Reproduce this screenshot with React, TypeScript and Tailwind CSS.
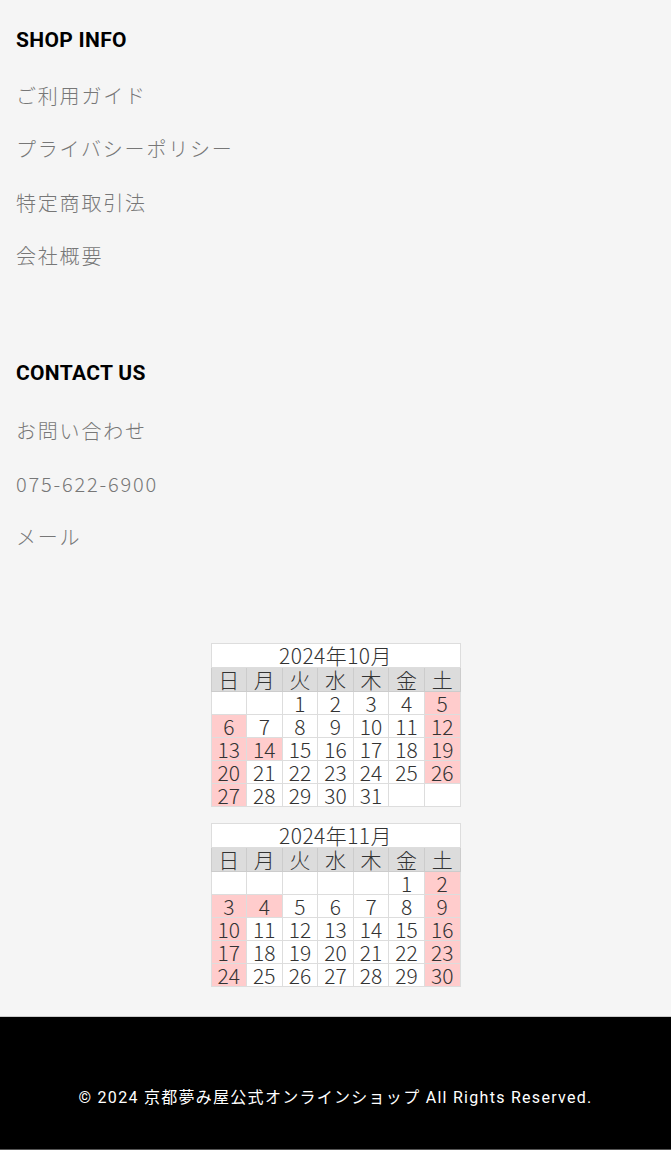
const jp = "font-['Noto_Sans_CJK_JP',sans-serif]";

type Cell = { d?: number; hol?: boolean };

const oct: Cell[][] = [
  [{}, {}, { d: 1 }, { d: 2 }, { d: 3 }, { d: 4 }, { d: 5, hol: true }],
  [{ d: 6, hol: true }, { d: 7 }, { d: 8 }, { d: 9 }, { d: 10 }, { d: 11 }, { d: 12, hol: true }],
  [{ d: 13, hol: true }, { d: 14, hol: true }, { d: 15 }, { d: 16 }, { d: 17 }, { d: 18 }, { d: 19, hol: true }],
  [{ d: 20, hol: true }, { d: 21 }, { d: 22 }, { d: 23 }, { d: 24 }, { d: 25 }, { d: 26, hol: true }],
  [{ d: 27, hol: true }, { d: 28 }, { d: 29 }, { d: 30 }, { d: 31 }, {}, {}],
];

const nov: Cell[][] = [
  [{}, {}, {}, {}, {}, { d: 1 }, { d: 2, hol: true }],
  [{ d: 3, hol: true }, { d: 4, hol: true }, { d: 5 }, { d: 6 }, { d: 7 }, { d: 8 }, { d: 9, hol: true }],
  [{ d: 10, hol: true }, { d: 11 }, { d: 12 }, { d: 13 }, { d: 14 }, { d: 15 }, { d: 16, hol: true }],
  [{ d: 17, hol: true }, { d: 18 }, { d: 19 }, { d: 20 }, { d: 21 }, { d: 22 }, { d: 23, hol: true }],
  [{ d: 24, hol: true }, { d: 25 }, { d: 26 }, { d: 27 }, { d: 28 }, { d: 29 }, { d: 30, hol: true }],
];

const week = ["日", "月", "火", "水", "木", "金", "土"];

function Calendar({ title, rows }: { title: string; rows: Cell[][] }) {
  return (
    <table className={`w-[250px] table-fixed border-collapse border border-[#d4d4d4] text-center text-[21px] font-light leading-[22px] text-[#333] ${jp}`}>
      <thead>
        <tr>
          <th colSpan={7} className="border border-[#ddd] bg-white p-0 font-light leading-[23px] tracking-[0.02em]">
            {title}
          </th>
        </tr>
        <tr>
          {week.map((w) => (
            <th key={w} className="border border-[#ccc] bg-[#dcdcdc] p-0 font-light leading-[23px]">
              {w}
            </th>
          ))}
        </tr>
      </thead>
      <tbody>
        {rows.map((r, i) => (
          <tr key={i}>
            {r.map((c, j) => (
              <td
                key={j}
                className={`border border-[#ddd] p-0 ${c.hol ? "bg-[#ffcccc]" : "bg-white"}`}
              >
                {c.d ?? "\u00a0"}
              </td>
            ))}
          </tr>
        ))}
      </tbody>
    </table>
  );
}

function LinkList({ items }: { items: string[] }) {
  return (
    <ul className="flex flex-col gap-[21.3px]">
      {items.map((t) => (
        <li key={t} className={`text-[20px] font-light leading-[32px] tracking-[0.09em] text-[#777] ${jp}`}>
          <a href="#">{t}</a>
        </li>
      ))}
    </ul>
  );
}

export default function App() {
  return (
    <div className="w-full">
      <div className="bg-[#f5f5f5] px-4 pt-[26px] pb-[29px]">
        <h3 className="font-['Roboto',sans-serif] text-[21px] font-bold leading-[28px] tracking-[0.015em] text-black">
          SHOP INFO
        </h3>
        <div className="mt-[26px]">
          <LinkList items={["ご利用ガイド", "プライバシーポリシー", "特定商取引法", "会社概要"]} />
        </div>

        <h3 className="mt-[87px] font-['Roboto',sans-serif] text-[21px] font-bold leading-[28px] tracking-[0.015em] text-black">
          CONTACT US
        </h3>
        <div className="mt-[28px]">
          <LinkList items={["お問い合わせ", "075-622-6900", "メール"]} />
        </div>

        <div className="mt-[90px] flex flex-col items-center gap-4">
          <Calendar title="2024年10月" rows={oct} />
          <Calendar title="2024年11月" rows={nov} />
        </div>
      </div>

      <footer className="border-t border-b border-t-[#ccc] border-b-[#555] bg-black pt-[70px] pb-[40px]">
        <p className="text-center font-['Roboto','Noto_Sans_CJK_JP',sans-serif] text-[16px] leading-[22px] tracking-[0.08em] text-white">
          © 2024 京都夢み屋公式オンラインショップ All Rights Reserved.
        </p>
      </footer>
    </div>
  );
}
